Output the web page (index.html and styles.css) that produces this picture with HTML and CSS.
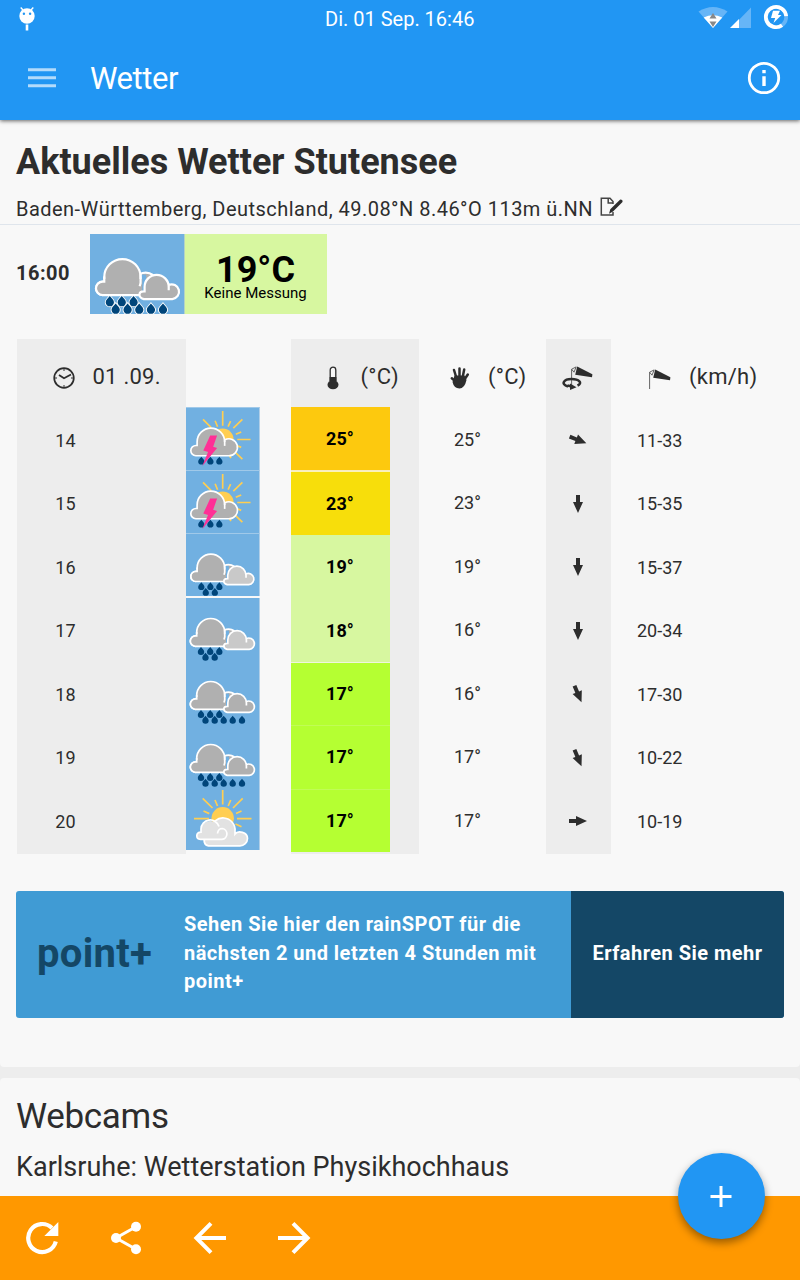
FILE: index.html
```html
<!DOCTYPE html>
<html lang="de">
<head>
<meta charset="utf-8">
<title>Wetter</title>
<link rel="stylesheet" href="styles.css">
</head>
<body>
<svg class="defs" width="0" height="0">
  <defs>
    <path id="drop" d="M0-4C1.2-2.4 3.2-1 3.2.8A3.2 3.2 0 0 1-3.2.8C-3.2-1-1.2-2.4 0-4Z"/>
    <path id="arrow" d="M-2-9H2V-2H5L0 9L-5-2H-2Z" fill="#2d2d2d"/>
    <g id="drops3"><use href="#drop" x="15" y="53"/><use href="#drop" x="24.2" y="53"/><use href="#drop" x="33.3" y="53"/></g>
    <g id="big-cloud">
      <path d="M40 48H43V31A6.5 6.5 0 0 1 48.5 32.5V46H40" fill="#b0b0b0"/>
      <path d="M9.4 48.3A5.2 5.2 0 0 1 9.6 37.9H10.7V34.5A14 14 0 0 1 38.7 34.5V38.5M37.8 32.2Q43.5 29.5 48.5 33" fill="#b0b0b0" stroke="#fff" stroke-width="1.7"/>
      <path d="M9.4 48.3H40V36H10V38H9.6A5.2 5.2 0 0 0 9.4 48.3Z" fill="#b0b0b0"/>
      <path d="M40 48.3H9.4A5.2 5.2 0 0 1 9.6 37.9H10.7V34M38.7 32V39L38 41.5" fill="none" stroke="#fff" stroke-width="1.7"/>
    </g>
    <path id="small-cloud" d="M41.2 51.4C36.5 50 36.8 45 41.8 45.4V42A9.3 9.3 0 0 1 60.4 42V44.5V40.5A5.7 5.7 0 1 1 63.2 51.4Z" stroke="#fff" stroke-width="1.7"/>
    <symbol id="storm" viewBox="0 0 73 63">
      <g stroke="#ffce52" stroke-width="1.7"><circle cx="36.6" cy="32" r="11.2" fill="#ffce52" stroke="none"/>
      <path d="M36.7 3V18M16.7 11.5L25 20M56.7 11.5L47.5 20.5M51.5 32H65M56.7 52L49.5 45M29 13L31.5 19M44.7 13.3L42.2 19M55.5 24.3L50 26.7M51 38L55.5 40M43.5 48L45 51"/></g>
      <path d="M9.4 48.5A5.2 5.2 0 0 1 9.6 38.1H10.7V34.5A14 14 0 0 1 38.7 34.5V32.5A8.6 8.6 0 1 1 43 48.5Z" fill="#b0b0b0" stroke="#fff" stroke-width="1.7"/>
      <path d="M38.7 33V38.5" stroke="#fff" stroke-width="1.7"/>
      <g fill="#00457a"><use href="#drops3" y=".5"/></g>
      <path d="M24 28H31L27 39.5L31 40.7L16 59L21.8 44.7L17 43.2Z" fill="#ff3096"/>
    </symbol>
    <symbol id="rain" viewBox="0 0 73 63"><use href="#big-cloud"/><use href="#small-cloud" fill="#c9c9c9"/>
      <g fill="#00457a"><use href="#drops3"/><use href="#drop" x="19.5" y="58.8"/><use href="#drop" x="28.7" y="58.8"/></g></symbol>
    <symbol id="heavy" viewBox="0 0 73 63"><use href="#big-cloud"/><use href="#small-cloud" fill="#b0b0b0"/>
      <g fill="#00457a"><use href="#drops3"/><use href="#drop" x="19.5" y="58.8"/><use href="#drop" x="28.7" y="58.8"/><use href="#drop" x="37.7" y="58.8"/><use href="#drop" x="46.7" y="58.8"/><use href="#drop" x="56" y="58.8"/></g></symbol>
    <symbol id="sunny" viewBox="0 0 73 63">
      <g stroke="#ffce52" stroke-width="1.7"><circle cx="36.7" cy="31.3" r="11.2" fill="#ffce52" stroke="none"/>
      <path d="M36.7 3V17.5M16.7 11.3L26.5 21M56.7 11.3L47 21M51 31.6H65.5M8 31.6H23M29 13L31.5 19M44.7 13L42.2 19M55.5 24L50 26.6M17.5 24L23.3 26.6M49.5 37L55.5 39.8"/></g>
      <path d="M22.5 58.8A5 5 0 0 1 20 50L25 42A12 12 0 0 1 49 44V47C52 43 61.5 45 61.5 51.5A7.5 7.5 0 0 1 54 58.8Z" fill="#e2e2e2" stroke="#fff" stroke-width="1.7"/>
      <path d="M14.5 52.4C9.5 52 9.5 45.5 15 45.2V42A9.2 9.2 0 0 1 33.2 41.5A5.6 5.6 0 1 1 36 52.4Z" fill="#e2e2e2"/>
      <path d="M31.5 46.5C31.8 44 33 41.5 36.3 41.5A5.5 5.5 0 0 1 36 52.4H14.5C9.5 52 9.5 45.5 15 45.2V42A9.2 9.2 0 0 1 33 39.5" fill="none" stroke="#fff" stroke-width="1.7"/>
    </symbol>
    <g id="sock"><path d="M.6 21V3.2L5.2.9L3 6.2L.6 3.2" fill="none" stroke="#555" stroke-width=".9"/><path d="M6.2.5L21.4 8.3L21 11.3L4.2 8.8Z" fill="#2d2d2d"/></g>
  </defs>
</svg>
<div class="screen">
  <header class="appbar">
    <div class="status">
      <svg class="bot" width="20" height="26" viewBox="0 0 20 26"><circle cx="10" cy="10" r="7.7" fill="#fff"/><path d="M3.7 1.5L6 4M16.3 1.5L14 4" stroke="#fff" stroke-width="1.4"/><path d="M10 18.5V24.5" stroke="#fff" stroke-width="2.6"/><circle cx="6.9" cy="7.8" r="1.2" fill="#2196f3"/><circle cx="13.1" cy="7.8" r="1.2" fill="#2196f3"/></svg>
      <span class="clock">Di. 01 Sep. 16:46</span>
      <svg class="signals" width="68" height="32" viewBox="0 0 68 32">
        <path d="M12.5 11.5Q27 2.5 41.5 11.5L27 28Z" fill="#66b5f7"/><path d="M17.7 17.6Q27 12.8 36.3 17.6L27 28Z" fill="#fff"/><path d="M27 13L30.5 18.5H23.5ZM27 27L30.5 21.5H23.5Z" fill="#888"/>
        <path d="M45 28L65 7.5V28Z" fill="#66b5f7"/><path d="M44 28L53 19V28Z" fill="#fff"/>
      </svg>
      <svg class="battery" width="28" height="28" viewBox="0 0 28 28"><circle cx="14" cy="14" r="10.2" fill="none" stroke="#66b5f7" stroke-width="3.7"/><path d="M20 22.3A10.2 10.2 0 1 1 24.2 13.2" fill="none" stroke="#fff" stroke-width="3.7"/><path d="M11 7.8H18L16 12H19.5L11.5 20L13.2 15H9Z" fill="#fff"/></svg>
    </div>
    <div class="toolbar">
      <svg width="28" height="22" viewBox="0 0 28 22"><path d="M0 2.8H28M0 10.8H28M0 18.8H28" stroke="#b3dbfb" stroke-width="3.1"/></svg>
      <span class="app-title">Wetter</span>
      <svg class="info" width="34" height="34" viewBox="0 0 34 34"><circle cx="17" cy="17" r="14.7" fill="none" stroke="#fff" stroke-width="2.8"/><path d="M17 9V12.2M17 15.2V25" stroke="#fff" stroke-width="3.4"/></svg>
    </div>
  </header>
  <main>
    <section class="card forecast">
      <h1><span>Aktuelles Wetter Stutensee</span></h1>
      <div class="place"><span>Baden-Württemberg, Deutschland, 49.08°N 8.46°O 113m ü.NN</span>
        <svg width="24" height="20" viewBox="0 0 24 20"><path d="M13 15V18H1.3V1.3H10L13 4.5V7M8.2 1V6H13" fill="none" stroke="#444" stroke-width="1.5"/><path d="M9 16.7L10.3 12.2L19.2 3.5Q20.5 1.8 22 3T21.5 6L13 14.5Z" fill="#2d2d2d"/></svg>
      </div>
      <div class="current"><b class="now">16:00</b><svg class="now-icon" viewBox="-.3 1.2 73 62" preserveAspectRatio="xMinYMin slice"><g stroke="#fff" stroke-width="1.4"><use href="#drops3"/><use href="#drop" x="19.5" y="58.8"/><use href="#drop" x="28.7" y="58.8"/><use href="#drop" x="37.7" y="58.8"/><use href="#drop" x="46.7" y="58.8"/><use href="#drop" x="56" y="58.8"/></g><use href="#heavy" width="73" height="63"/></svg>
        <div class="now-temp"><strong>19°C</strong><span>Keine Messung</span></div></div>
      <div class="hours">
        <div class="col hour"><div class="head"><svg width="22" height="22" viewBox="0 0 22 22"><circle cx="11" cy="11" r="9.8" fill="none" stroke="#2d2d2d" stroke-width="1.7"/><path d="M6 8L11 11.3L18 7.5" fill="none" stroke="#2d2d2d" stroke-width="1.8"/><path d="M11 2V4M11 18V20M2 11H4M18 11H20" stroke="#2d2d2d"/></svg><span>01 .09.</span></div>
          <p>14</p><p>15</p><p>16</p><p>17</p><p>18</p><p>19</p><p>20</p></div>
        <div class="col icons"><div class="head"></div>
          <svg class="line"><use href="#storm"/></svg><svg class="line"><use href="#storm"/></svg><svg class="line gap"><use href="#rain"/></svg><svg><use href="#rain"/></svg><svg><use href="#heavy"/></svg><svg><use href="#heavy"/></svg><svg><use href="#sunny"/></svg></div>
        <div class="col temp"><div class="head"><svg width="12" height="24" viewBox="0 0 12 24"><path d="M3.2 15V4A2.8 2.8 0 0 1 8.8 4V15" fill="#f7f7f7" stroke="#2d2d2d" stroke-width="1.3"/><path d="M2.6 11H9.4V15H2.6Z" fill="#2d2d2d"/><ellipse cx="6" cy="18.7" rx="5.5" ry="4.6" fill="#2d2d2d"/></svg><span>(°C)</span></div>
          <p class="t25">25°</p><p class="t23">23°</p><p class="t19">19°</p><p class="t19">18°</p><p class="t17">17°</p><p class="t17 thin">17°</p><p class="t17 thin">17°</p></div>
        <div class="col felt"><div class="head"><svg width="20" height="24" viewBox="0 0 20 24"><path d="M6.2 11L4 4M9.5 10V2.5M12.9 10L14.2 3.5M14.8 13L17.8 8.5M5 15L1.8 12.3" stroke="#2d2d2d" stroke-width="2.5" stroke-linecap="round"/><path d="M4.5 9.5H14.5L16.5 14Q14.5 22.5 9.5 22.5Q4 22.5 2.5 16Z" fill="#2d2d2d"/></svg><span>(°C)</span></div>
          <p>25°</p><p>23°</p><p>19°</p><p>16°</p><p>16°</p><p>17°</p><p>17°</p></div>
        <div class="col dir"><div class="head"><svg width="32" height="26" viewBox="0 0 32 26"><use href="#sock" x="9" y="1"/><path d="M6 21.5C-2 19 2 14 9.5 14S21 18 15.5 20.5" fill="none" stroke="#2d2d2d" stroke-width="2.5"/><path d="M5.5 20.5L10 21.5" stroke="#2d2d2d" stroke-width="2.4"/><path d="M8 18.5L14.5 22.3L8 25Z" fill="#2d2d2d"/></svg></div>
          <p><svg viewBox="-10 -10 20 20"><use href="#arrow" transform="rotate(-68)"/></svg></p><p><svg viewBox="-10 -10 20 20"><use href="#arrow"/></svg></p><p><svg viewBox="-10 -10 20 20"><use href="#arrow"/></svg></p><p><svg viewBox="-10 -10 20 20"><use href="#arrow"/></svg></p><p><svg viewBox="-10 -10 20 20"><use href="#arrow" transform="rotate(-23)"/></svg></p><p><svg viewBox="-10 -10 20 20"><use href="#arrow" transform="rotate(-23)"/></svg></p><p><svg viewBox="-10 -10 20 20"><use href="#arrow" transform="rotate(-90)"/></svg></p></div>
        <div class="col wind"><div class="head"><svg width="22" height="22" viewBox="0 0 22 22"><use href="#sock" y="2"/></svg><span>(km/h)</span></div>
          <p>11-33</p><p>15-35</p><p>15-37</p><p>20-34</p><p>17-30</p><p>10-22</p><p>10-19</p></div>
      </div>
      <div class="banner"><b class="logo">point+</b><div class="pitch">Sehen Sie hier den rainSPOT für die<br>nächsten 2 und letzten 4 Stunden mit<br>point+</div><b class="more"><span>Erfahren Sie mehr</span></b></div>
    </section>
    <section class="card webcams"><h2><span>Webcams</span></h2><h3><span>Karlsruhe: Wetterstation Physikhochhaus</span></h3></section>
  </main>
  <footer>
    <svg viewBox="0 0 34 34"><path d="M30.8 20.5A14 14 0 1 1 27 7" fill="none" stroke="#fff" stroke-width="4.2"/><path d="M33.3 1V15H19.3Z" fill="#fff"/></svg>
    <svg viewBox="0 0 34 34"><path d="M27 5.8L7 17L27 28.2" fill="none" stroke="#fff" stroke-width="3"/><g fill="#fff"><circle cx="27" cy="5.8" r="5"/><circle cx="7" cy="17" r="5"/><circle cx="27" cy="28.2" r="5"/></g></svg>
    <svg viewBox="0 0 34 34"><path d="M33 17H4M18 2.4L3.4 17L18 31.6" fill="none" stroke="#fff" stroke-width="4"/></svg>
    <svg viewBox="0 0 34 34"><path d="M1 17H30M16 2.4L30.6 17L16 31.6" fill="none" stroke="#fff" stroke-width="4"/></svg>
  </footer>
  <button class="fab" aria-label="Hinzufügen"><svg width="22" height="22" viewBox="0 0 22 22"><path d="M.5 11.5H21.5M11 1V22" stroke="#fff" stroke-width="3"/></svg></button>
</div>
</body>
</html>
```

FILE: styles.css
```css
* { box-sizing: border-box; }
body { margin: 0; font-family: Roboto, "Liberation Sans", sans-serif; color: #2d2d2d; }
svg { display: block; flex: none; }
p, h1, h2, h3 { margin: 0; font-weight: 400; }
.defs { position: absolute; }
.screen { position: relative; width: 800px; height: 1280px; display: flex; flex-direction: column; overflow: hidden; background: #ededed; }
.appbar { height: 120px; flex: none; background: #2196f3; color: #fff; box-shadow: 0 1px 4px rgba(0,0,0,.6); z-index: 1; }
.status { height: 38px; display: flex; align-items: center; padding: 0 10px 0 17px; }
.bot { margin-top: -1px; margin-right: 288px; }
.clock { font-size: 20px; letter-spacing: 0; width: 160px; white-space: nowrap; }
.signals { margin-left: 201px; margin-top: -6px; }
.battery { margin-top: -4px; margin-left: 8px; }
.toolbar { height: 80px; display: flex; align-items: center; padding: 0 19px 0 28px; }
.app-title { margin-left: 34px; font-size: 31px; letter-spacing: -.45px; }
.info { margin-left: auto; }
main { flex: 1; min-height: 0; overflow: hidden; }
.card { background: #f8f8f8; }
.forecast { height: 947px; border-radius: 0 0 4px 4px; }
h1 { height: 73px; padding: 17px 0 0 16px; font-size: 36px; line-height: 50px; font-weight: 700; letter-spacing: 0; }
.place { height: 32px; display: flex; align-items: center; gap: 6.5px; padding-left: 16px; font-size: 20px; letter-spacing: .47px; border-bottom: 1px solid #dfe5ec; }
.place svg { margin-top: -3px; }
.current { display: flex; height: 81px; margin-top: 9px; padding-left: 16px; align-items: stretch; }
.now { width: 74px; font-size: 20px; line-height: 78px; letter-spacing: .5px; }
.now-icon { width: 94px; height: 80.4px; background: #71b0e1; }
.now-temp { width: 143px; height: 80.4px; border-left: 1px solid #b4d3c4; background: #d7f7a0; color: #000; text-align: center; display: flex; flex-direction: column; padding-right: 1px; }
.now-temp strong { font-size: 36px; line-height: 34px; margin-top: 19px; }
.now-temp span { font-size: 15px; line-height: 14px; margin-top: -1px; }
.hours { display: flex; margin: 24px 0 0 17px; height: 515px; }
.col { display: flex; flex-direction: column; font-size: 18px; }
.head { height: 68px; flex: none; display: flex; align-items: center; padding-top: 10px; font-size: 22px; letter-spacing: .25px; }
.head span { margin-top: -4px; white-space: nowrap; }
.col p { height: 63.5px; flex: none; display: flex; align-items: center; }
.hour { width: 169px; background: #ededed; }
.hour .head { padding-left: 36px; gap: 17.5px; }
.hour p { padding: 3px 0 0 38.3px; }
.icons { width: 105px; }
.icons > svg { width: 74px; height: 63px; background: #71b0e1; border-right: 1px solid #b1cfe8; }
.icons .line { border-top: 1px solid #a0c9e9; }
.icons .gap { margin-bottom: 2px; }
.temp { width: 128px; background: #ededed; }
.temp .head { padding-left: 36px; gap: 21.5px; }
.temp p { width: 99px; justify-content: center; font-weight: 700; color: #000; letter-spacing: .1px; padding-right: 1px; }
.temp .t25 { height: 64px; background: #fdc90e; border-bottom: 1px solid #f7ebc2; }
.temp .t23 { height: 64px; background: #f7de0b; border-top: 1px solid #fbf3b8; }
.temp .t19 { background: #d7f7a0; }
.temp .t17 { height: 63.3px; background: #b5ff32; padding-bottom: 1px; }
.temp .t19 + .t17 { border-top: 1px solid #eef5df; }
.temp .thin { border-top: 1px solid #c0fc56; }
.felt { width: 127px; }
.felt .head { padding-left: 31px; gap: 18px; }
.felt p { padding: .6px 0 0 35px; }
.dir { width: 65px; background: #ededed; }
.dir .head { padding-left: 16px; }
.dir p { justify-content: center; padding-top: 3px; padding-right: 2px; }
.dir p svg { width: 20px; height: 20px; }
.wind { width: 174px; }
.wind .head { padding-left: 38px; gap: 18px; }
.wind p { padding: 3px 0 0 26px; }
.banner { display: flex; width: 768px; height: 127px; margin: 37px 0 0 16px; border-radius: 3px; overflow: hidden; color: #fff; background: #409bd4; }
.logo { width: 168px; padding-left: 21px; font-size: 40px; letter-spacing: .3px; line-height: 125px; color: #144766; }
.pitch { width: 387px; font-size: 20px; line-height: 28.5px; font-weight: 700; padding-top: 19px; letter-spacing: .48px; white-space: nowrap; }
.more { flex: 1; background: #144766; text-align: center; font-size: 20px; line-height: 124px; letter-spacing: .48px; }
.webcams { height: 130px; margin-top: 11px; padding-left: 16px; border-radius: 4px 4px 0 0; }
h2 { font-size: 35px; line-height: 50px; padding-top: 14px; letter-spacing: -.3px; }
h3 { font-size: 27px; line-height: 40px; padding-top: 5px; }
footer { height: 84px; flex: none; background: #ff9800; display: flex; align-items: center; gap: 50px; padding-left: 25px; }
footer svg { width: 34px; height: 34px; }
.fab { position: absolute; left: 678px; top: 1153px; width: 87px; height: 86px; border: 0; border-radius: 50%; padding: 0 2px 0 0; background: #2196f3; display: flex; align-items: center; justify-content: center; box-shadow: 0 4px 8px rgba(0,0,0,.4); z-index: 2; }
```
